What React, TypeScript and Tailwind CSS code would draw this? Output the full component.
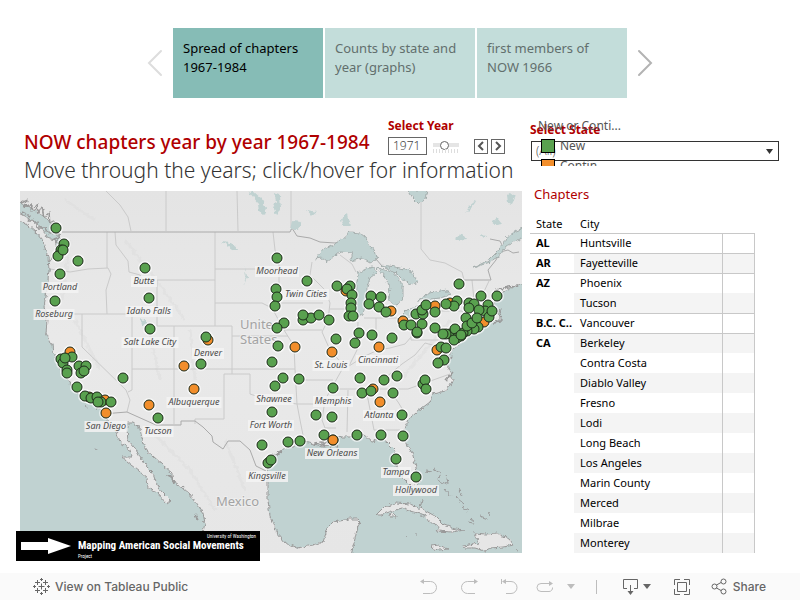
import { useState } from 'react'

type Dot = [number, number]

interface MapLabel {
  text: string
  x: number
  y: number
  w: number
}

interface ChapterRow {
  state?: string
  city: string
}

const TABS = [
  'Spread of chapters 1967-1984',
  'Counts by state and year (graphs)',
  'first members of NOW 1966'
]

const ROWS: ChapterRow[] = [
  { state: 'AL', city: 'Huntsville' },
  { state: 'AR', city: 'Fayetteville' },
  { state: 'AZ', city: 'Phoenix' },
  { city: 'Tucson' },
  { state: 'B.C. C..', city: 'Vancouver' },
  { state: 'CA', city: 'Berkeley' },
  { city: 'Contra Costa' },
  { city: 'Diablo Valley' },
  { city: 'Fresno' },
  { city: 'Lodi' },
  { city: 'Long Beach' },
  { city: 'Los Angeles' },
  { city: 'Marin County' },
  { city: 'Merced' },
  { city: 'Milbrae' },
  { city: 'Monterey' }
]

const LABELS: MapLabel[] = [
  { text: 'Portland', x: 60, y: 287, w: 37 },
  { text: 'Roseburg', x: 54, y: 314, w: 41 },
  { text: 'Butte', x: 144, y: 281, w: 26 },
  { text: 'Idaho Falls', x: 149, y: 311, w: 47 },
  { text: 'Salt Lake City', x: 150, y: 342, w: 57 },
  { text: 'Denver', x: 208, y: 353, w: 32 },
  { text: 'Albuquerque', x: 194, y: 402, w: 55 },
  { text: 'San Diego', x: 106, y: 426, w: 43 },
  { text: 'Tucson', x: 158, y: 431, w: 31 },
  { text: 'Moorhead', x: 277, y: 271, w: 44 },
  { text: 'Twin Cities', x: 306, y: 294, w: 46 },
  { text: 'St. Louis', x: 331, y: 365, w: 37 },
  { text: 'Cincinnati', x: 378, y: 360, w: 44 },
  { text: 'Shawnee', x: 274, y: 399, w: 39 },
  { text: 'Memphis', x: 333, y: 401, w: 40 },
  { text: 'Fort Worth', x: 271, y: 425, w: 46 },
  { text: 'Atlanta', x: 379, y: 415, w: 32 },
  { text: 'New Orleans', x: 332, y: 453, w: 54 },
  { text: 'Kingsville', x: 267, y: 476, w: 42 },
  { text: 'Tampa', x: 396, y: 472, w: 30 },
  { text: 'Hollywood', x: 416, y: 490, w: 46 }
]

// Continued chapters sit under the new ones
const CONTINUED: Dot[] = [
  [70, 352], [89, 397], [105, 400], [106, 413], [149, 405], [184, 366], [194, 389], [208, 340],
  [295, 347], [332, 352], [346, 291], [391, 311], [379, 347], [403, 321], [435, 306], [450, 303],
  [484, 322], [437, 350], [333, 440], [373, 389], [380, 402]
]

const NEW_CHAPTERS: Dot[] = [
  [56, 228], [64, 244], [61, 250], [58, 256], [63, 250], [78, 261], [60, 274], [55, 301],
  [145, 268], [149, 298], [150, 329], [72, 357], [61, 359], [63, 363], [65, 358], [79, 366],
  [86, 366], [67, 370], [67, 373], [81, 373], [84, 371], [77, 387], [85, 396], [91, 398],
  [97, 397], [101, 402], [98, 402], [111, 402], [123, 378], [158, 418], [206, 337], [201, 364],
  [277, 258], [307, 281], [276, 289], [277, 297], [275, 306], [284, 323], [277, 328], [278, 346],
  [272, 362], [336, 339], [329, 320], [303, 320], [311, 318], [319, 315], [303, 315], [337, 286],
  [350, 286], [347, 289], [352, 295], [351, 303], [351, 308], [349, 316], [353, 316], [359, 333],
  [355, 343], [371, 296], [369, 304], [381, 297], [379, 307], [386, 312], [372, 335], [392, 338],
  [404, 325], [411, 325], [422, 324], [417, 333], [417, 332], [416, 314], [423, 314], [422, 310],
  [426, 305], [435, 312], [457, 301], [454, 306], [446, 304], [459, 284], [481, 296], [497, 296],
  [469, 303], [474, 304], [469, 308], [488, 305], [485, 311], [489, 317], [479, 310], [492, 311],
  [466, 318], [478, 327], [474, 329], [467, 331], [463, 333], [450, 334], [446, 334],
  [435, 328], [455, 329], [467, 326], [461, 336], [472, 323], [477, 318], [443, 334], [457, 338],
  [454, 340], [461, 335], [441, 347], [446, 348], [444, 360], [438, 363], [283, 378], [299, 379],
  [275, 386], [272, 412], [333, 388], [316, 415], [332, 417], [262, 445], [288, 442], [300, 441],
  [324, 435], [357, 435], [268, 463], [271, 460], [360, 378], [384, 380], [397, 376], [362, 393],
  [371, 391], [393, 393], [402, 415], [381, 435], [403, 436], [396, 459], [416, 477], [423, 384],
  [425, 380], [426, 389]
]

const OCEANS = [
  // Pacific and the Gulf of California
  'M15 218 L28 225 L36 232 L43 240 L44 245 L48 257 L49 270 L47 290 L44 307 L47 320 L46 333 L52 345 L53 353 L57 358 L59 367 L62 373 L70 383 L77 393 L83 398 L95 404 L102 412 L106 418 L112 425 L117 433 L120 442 L128 448 L132 457 L123 457 L127 462 L135 468 L140 472 L147 478 L148 488 L157 493 L167 504 L171 501 L163 493 L158 487 L153 473 L147 467 L140 457 L135 448 L128 440 L127 430 L127 423 L133 423 L140 428 L142 438 L146 450 L153 456 L163 465 L172 473 L172 480 L182 487 L190 494 L198 505 L203 513 L205 523 L203 532 L210 560 L15 560 Z',
  // Gulf of Mexico and Atlantic
  'M268 483 L267 470 L270 462 L277 453 L290 447 L302 442 L310 443 L318 445 L323 447 L333 446 L327 440 L337 437 L350 437 L363 434 L372 442 L378 438 L387 442 L395 450 L393 460 L398 470 L405 480 L412 487 L418 485 L419 477 L416 468 L412 453 L407 445 L403 435 L405 427 L410 418 L422 408 L430 402 L433 394 L445 391 L450 385 L453 380 L450 372 L448 368 L447 358 L452 350 L457 347 L465 337 L477 330 L485 325 L492 320 L500 321 L500 316 L495 310 L494 302 L503 292 L513 287 L530 283 L530 560 L350 560 L354 543 L357 530 L360 522 L357 519 L350 519 L333 522 L328 527 L323 542 L313 545 L297 548 L285 543 L277 533 L270 517 L268 500 Z',
  // Straits round Vancouver Island
  'M15 201 L27 206 L38 212 L48 220 L53 231 L60 235 L61 245 L57 248 L55 240 L47 238 L43 229 L33 221 L15 211 Z'
]

const LAKES = [
  'M315 259 L322 251 L333 245 L342 239 L350 232 L360 233 L365 237 L370 245 L378 258 L370 262 L363 258 L350 261 L353 253 L340 252 L327 262 L322 258 Z',
  'M357 282 L358 273 L366 269 L373 267 L377 272 L370 278 L367 287 L366 300 L363 315 L358 317 L356 307 Z',
  'M377 268 L393 272 L398 278 L403 287 L403 298 L397 305 L392 303 L388 298 L390 287 L385 277 Z',
  'M381 265 L395 267 L410 270 L414 276 L418 282 L412 285 L403 280 L395 272 Z',
  'M397 320 L407 310 L422 305 L417 312 L411 316 L401 322 Z',
  'M418 300 L430 293 L447 290 L450 295 L440 298 L430 299 Z',
  'M524 228 L516 231 L507 237 L503 244 L497 252 L490 259 L483 263 L473 268 L490 262 L501 254 L506 246 L514 242 L524 237 Z',
  'M408 190 L427 190 L425 200 L418 203 L413 198 Z'
]

const SMALL_LAKES = [
  'M249 192 L253 191 L262 199 L266 208 L264 215 L259 211 L258 203 Z',
  'M274 193 L280 195 L281 209 L276 214 L273 208 L276 201 Z',
  'M341 219 L347 214 L350 226 L343 226 Z',
  'M307 210 L317 212 L312 216 Z',
  'M292 221 L301 222 L298 230 L290 230 Z',
  'M466 213 L469 206 L477 200 L472 207 Z',
  'M454 238 L462 234 L466 240 L457 241 Z',
  'M507 195 L511 192 L516 196 L512 204 L508 203 Z',
  'M492 222 L497 218 L502 224 L496 225 Z',
  'M480 235 L486 236 L484 239 Z',
  'M140 318 L146 321 L148 326 L142 325 Z',
  'M222 242 L231 243 L239 250 L232 249 Z',
  'M244 265 L247 276 L244 286 L246 275 Z'
]

const ISLANDS = [
  'M376 515 L384 507 L396 503 L410 504 L424 510 L435 516 L444 525 L455 529 L465 530 L452 532 L436 531 L440 526 L429 522 L424 515 L410 511 L402 508 L392 511 L381 515 Z',
  'M463 546 L474 544 L479 543 L474 533 L486 534 L498 533 L509 539 L514 545 L503 547 L490 548 L485 551 L475 548 L464 548 Z',
  'M431 546 L439 545 L448 549 L439 550 L432 549 Z',
  'M390 514 L395 513 L396 517 L391 517 Z'
]

const KEYS =
  'M425 471 L432 472 M434 469 L441 473 L439 478 M438 480 L446 484 M444 488 L451 496 M456 497 L464 504 M462 507 L468 511 M470 518 L475 522 M480 516 L488 519 M473 523 L468 522 M97 409 L102 411 M86 406 L87 408 M96 448 L97 450 M405 537 L407 538 M416 534 L418 534 M422 500 L420 507 M446 474 L448 484 M458 489 L462 496 M490 516 L488 512 M516 549 L518 550'

const NATIONAL =
  'M62 232 L290 232 L292 228 L297 236 L310 238 L320 242 L335 243 L345 241 L351 238 M351 242 L376 259 L382 266 M102 414 L127 412 L156 425 L181 425 L181 421 L195 421 L203 427 L212 436 L213 442 L223 449 L228 441 L240 441 L250 450 L256 466 L266 471 M464 280 L491 280 L488 270 L496 260 L500 252 L508 250 L513 253 L519 252 M490 239 L500 241 L503 247'

const STATES =
  'M107 232 V268 M50 269 L70 272 L88 269 L108 268 L111 274 L106 290 L107 314 M115 232 L116 245 L128 261 L129 272 L140 275 L143 280 M157 280 H215 M157 280 V326 H174 V369 M48 314 H132 V369 M82 314 V347 L126 390 L130 400 L127 412 M132 369 V390 L128 392 M215 232 V326 M174 326 H232 V374 M132 369 H295 M174 369 V424 M224 374 V419 H195 V424 M224 374 H250 V394 L265 399 L297 404 M215 269 H279 M215 303 H262 L272 308 L284 330 L294 346 L295 369 L297 404 L300 420 L304 440 M273 232 L275 250 L279 265 L279 303 H323 M284 330 L322 330 M232 336 H288 M312 262 L310 275 L325 290 L330 303 L328 320 L322 332 L330 350 L344 366 L335 382 L325 400 L322 420 L325 428 H336 M296 380 H333 M330 389 H408 L450 374 M348 390 L347 432 M366 389 L374 430 H400 M388 389 L398 402 L406 415 M330 309 H350 M358 322 L357 350 L349 366 L365 356 L378 350 L390 348 L405 344 L412 336 M376 318 V348 M364 318 H397 M411 322 V340 H455 M430 311 H462 L468 320 L463 332 M421 195 V249 L430 260 L445 263 L462 272 L464 280 M472 280 L474 300 M481 298 L489 281 M466 307 H490 M385 378 L402 364 L415 355 L425 343 L436 346 M166 191 V231 M106 191 L120 205 L128 217 L131 231 M237 191 L238 231 M291 191 V228 M297 404 H321 M340 255 L352 264 L356 272'

const FJORDS =
  'M20 203 L27 200 L24 207 L32 204 L31 211 L37 204 L38 213 L42 207 L44 217 L49 213 L50 224 L54 222 M22 212 L30 216 L28 221 L37 221 L37 228 L46 228 L49 234 L56 233 L60 237 L54 239 L60 244 L57 249 L62 253 M49 262 L52 258 M166 476 L172 477 L174 483 M195 515 L198 520 M272 456 L282 451 M314 443 L325 446 L321 441 L337 446 M331 438 L341 437 M446 380 L453 372 M493 291 L508 287 L517 286 M496 314 L500 310 L501 322 L493 323 M445 351 L449 360 L452 356'

function ChapterMap() {
  return (
    <svg viewBox="20 191 502 362" className="block w-full" role="img" aria-label="Map of NOW chapters">
      <defs>
        <filter id="coast" x="-5%" y="-5%" width="110%" height="110%">
          <feTurbulence type="fractalNoise" baseFrequency="0.25" numOctaves="2" seed="4" />
          <feDisplacementMap in="SourceGraphic" scale="5" xChannelSelector="R" yChannelSelector="G" />
        </filter>
        <linearGradient id="land" x1="0" y1="0" x2="0" y2="1">
          <stop offset="0" stopColor="#e4e4e4" />
          <stop offset="0.4" stopColor="#e9e9e9" />
          <stop offset="1" stopColor="#e6e6e6" />
        </linearGradient>
      </defs>
      <rect x="20" y="191" width="502" height="362" fill="url(#land)" />

      {/* Mountain shading */}
      <g stroke="#dedede" strokeWidth="3" fill="none" opacity="0.5" filter="url(#coast)">
        <path d="M65 200 L95 220 M70 240 L62 300 M125 240 L160 285 L185 320 M150 335 L160 380 M190 330 L195 380 M75 320 L100 370 M150 430 L190 470 L215 510 M225 440 L245 490 M400 380 L430 345 L450 320" />
      </g>

      <g fill="none" stroke="#cacaca" strokeWidth="1">
        <path d={STATES} />
        <path d={NATIONAL} stroke="#aaaaaa" />
      </g>

      <g filter="url(#coast)" stroke="#999999" strokeWidth="1" fill="#c0d2d1" strokeLinejoin="round">
        {OCEANS.map((d) => <path key={d} d={d} />)}
        {LAKES.map((d) => <path key={d} d={d} stroke="#a5aead" />)}
        {SMALL_LAKES.map((d) => <path key={d} d={d} stroke="none" />)}
        {ISLANDS.map((d) => <path key={d} d={d} fill="#e6e6e6" />)}
        <path d={KEYS} fill="none" />
        <path d={FJORDS} fill="none" strokeWidth="1.5" />
      </g>

      <g fill="#a3a3a3" stroke="#eeeeee" strokeWidth="2" paintOrder="stroke" className="font-['Noto_Sans',sans-serif] text-[13px]">
        <text x="240" y="329">United</text>
        <text x="240" y="344">States</text>
        <text x="216" y="506">Mexico</text>
      </g>

      <g className="font-['Noto_Sans',sans-serif] text-[9px] italic" textAnchor="middle">
        {LABELS.map((label) => (
          <g key={label.text}>
            <rect x={label.x - label.w / 2} y={label.y - 5} width={label.w} height="11" fill="#f3f3f3" fillOpacity="0.85" />
            <text x={label.x} y={label.y + 3} fill="#4a4a4a">{label.text}</text>
          </g>
        ))}
      </g>

      <g fill="none" stroke="#ffffff" strokeOpacity="0.6" strokeWidth="2">
        {[...CONTINUED, ...NEW_CHAPTERS].map(([x, y], i) => <circle key={i} cx={x} cy={y} r="6" />)}
      </g>
      <g stroke="#1d2b1a" strokeWidth="1">
        {CONTINUED.map(([x, y], i) => <circle key={i} cx={x} cy={y} r="5" fill="#f28e2b" />)}
        {NEW_CHAPTERS.map(([x, y], i) => <circle key={i} cx={x} cy={y} r="5" fill="#59a14f" />)}
        {/* New Orleans lies over its neighbour */}
        <circle cx="333" cy="440" r="5" fill="#f28e2b" />
      </g>
    </svg>
  )
}

function TableauMark() {
  return (
    <svg width="17" height="17" viewBox="0 0 17 17" fill="none" stroke="#666666" aria-hidden="true">
      <path d="M8.5 5.5v6M5.5 8.5h6M8.5 0v3M7 1.5h3M8.5 14v3M7 15.5h3M1.5 7v3M0 8.5h3M15.5 7v3M14 8.5h3M4.5 2v5M2 4.5h5M12.5 2v5M10 4.5h5M4.5 10v5M2 12.5h5M12.5 10v5M10 12.5h5" />
    </svg>
  )
}

function ToolbarIcon({ d, fill, width = 18 }: { d: string; fill?: string; width?: number }) {
  return (
    <svg width={width} height="18" viewBox={`0 0 ${width} 18`} fill="none" stroke="currentColor" aria-hidden="true">
      <path d={d} />
      {fill && <path d={fill} fill="currentColor" stroke="none" />}
    </svg>
  )
}

export default function App() {
  const [activeTab, setActiveTab] = useState(0)
  const [year, setYear] = useState(1971)

  return (
    <div className="flex min-h-screen flex-col bg-white font-['Noto_Sans',sans-serif] text-black">
      {/* Story points */}
      <nav className="flex items-center justify-center gap-2.5 pt-7">
        <button className="text-[#dddddd]" aria-label="Previous" disabled>
          <svg width="16" height="28" viewBox="0 0 16 28" fill="none" stroke="currentColor" strokeWidth="2" strokeLinecap="round">
            <path d="M14 2L2 14l12 12" />
          </svg>
        </button>
        <div className="flex gap-0.5">
          {TABS.map((tab, i) => (
            <button
              key={tab}
              onClick={() => setActiveTab(i)}
              className={`flex h-[70px] w-[150px] items-start px-2.5 pt-[11px] text-left text-[13px] leading-[19px] ${
                i === activeTab ? 'bg-[#86bcb6] text-black' : 'bg-[#c3ddda] text-[#626f6d]'
              }`}
            >
              {tab}
            </button>
          ))}
        </div>
        <button className="text-[#b3b3b3]" aria-label="Next">
          <svg width="16" height="28" viewBox="0 0 16 28" fill="none" stroke="currentColor" strokeWidth="2" strokeLinecap="round">
            <path d="M2 2l12 12L2 26" />
          </svg>
        </button>
      </nav>

      <main className="flex flex-1 gap-2 pl-5 pr-[21px] pt-[18px]">
        <section className="min-w-0 flex-1">
          <header className="pl-1">
            <div className="flex items-end justify-between pr-4">
              <h1 className="whitespace-nowrap text-[19px] font-medium leading-7 text-[#b00000]">NOW chapters year by year 1967-1984</h1>
              <div className="w-[118px] pb-px">
                <label htmlFor="year" className="mb-px block text-[12px] font-bold leading-5 text-[#b00000]">Select Year</label>
                <div className="flex items-center">
                  <input
                    id="year"
                    value={year}
                    onChange={(e) => setYear(Number(e.target.value) || 1967)}
                    className="h-[18px] w-[39px] border border-[#666666] pl-1 text-[12px] font-light text-[#444444]"
                  />
                  <div className="ml-1.5 flex w-[26px] flex-col gap-0.5 pt-1">
                    <input
                      type="range"
                      aria-label="Year"
                      min="1967"
                      max="1977"
                      value={year}
                      onChange={(e) => setYear(Number(e.target.value))}
                      className="h-1 w-full appearance-none bg-[#e5e5e5] [&::-webkit-slider-thumb]:h-[9px] [&::-webkit-slider-thumb]:w-[9px] [&::-webkit-slider-thumb]:appearance-none [&::-webkit-slider-thumb]:rounded-full [&::-webkit-slider-thumb]:border [&::-webkit-slider-thumb]:border-[#666666] [&::-webkit-slider-thumb]:bg-white"
                    />
                    <div className="h-1 bg-[repeating-linear-gradient(90deg,#dddddd_0_1px,transparent_1px_3px)]" />
                  </div>
                  <div className="ml-auto flex gap-[3px] pr-px text-[#555555]">
                    <button aria-label="Previous year" onClick={() => setYear(year - 1)} className="flex h-[15px] w-3.5 items-center justify-center border border-[#666666]">
                      <svg width="8" height="10" viewBox="0 0 8 10" fill="none" stroke="currentColor" strokeWidth="2"><path d="M6 1L2 5l4 4" /></svg>
                    </button>
                    <button aria-label="Next year" onClick={() => setYear(year + 1)} className="flex h-[15px] w-3.5 items-center justify-center border border-[#666666]">
                      <svg width="8" height="10" viewBox="0 0 8 10" fill="none" stroke="currentColor" strokeWidth="2"><path d="M2 1l4 4-4 4" /></svg>
                    </button>
                  </div>
                </div>
              </div>
            </div>
            <h2 className="whitespace-nowrap text-[21px] font-light leading-7 text-[#333333]">Move through the years; click/hover for information</h2>
          </header>

          <div className="relative mt-[7px]">
            <ChapterMap />
            <div className="absolute -bottom-2 -left-1 flex h-[30px] w-[244px] items-center bg-black pl-1 text-white">
              <svg width="52" height="16" viewBox="0 0 52 16" fill="#ffffff" className="shrink-0" aria-hidden="true">
                <path d="M1 4h27V0l23 8-23 8v-4H1z" />
              </svg>
              <div className="relative flex-1 pl-1.5 font-['Roboto_Condensed','Liberation_Sans_Narrow','Liberation_Sans',sans-serif]">
                <div className="whitespace-nowrap text-[11px] font-bold leading-4">Mapping American Social Movements</div>
                <div className="absolute -top-1.5 right-1 text-[5px] leading-2">University of Washington</div>
                <div className="absolute top-3.5 left-1.5 text-[5px] leading-2">Project</div>
              </div>
            </div>
          </div>
        </section>

        <aside className="w-[249px] shrink-0 pt-1.5">
          <div className="relative">
            <label htmlFor="state" className="block text-[12px] font-bold leading-4 text-[#b00000]">Select State</label>
            <div className="relative ml-px mt-[3px]">
              <select id="state" className="block h-5 w-full appearance-none border border-[#333333] bg-white pl-1 text-[12px] font-light text-[#555555]">
                <option>(All)</option>
              </select>
              <svg width="7" height="5" viewBox="0 0 7 5" className="pointer-events-none absolute right-1.5 top-2" aria-hidden="true">
                <path d="M0 0h7L3.5 5z" fill="#333333" />
              </svg>
            </div>
            {/* Colour legend floats over the state filter */}
            <div className="pointer-events-none absolute -top-1 left-2 h-12 w-24 overflow-hidden text-[12px] text-[#555555]">
              <div className="mb-0.5 leading-4">New or Conti...</div>
              <div className="flex h-5 items-center gap-[5px] pl-[3px]">
                <span className="h-3.5 w-3.5 border border-black bg-[#59a14f]" />
                <span>New</span>
              </div>
              <div className="flex h-5 items-center gap-[5px] pl-[3px]">
                <span className="h-3.5 w-3.5 border border-black bg-[#f28e2b]" />
                <span>Contin..</span>
              </div>
            </div>
          </div>

          <h3 className="mt-[23px] pl-1 text-[13px] leading-5 text-[#b00000]">Chapters</h3>

          <table className="mt-3 w-[225px] table-fixed border-collapse text-[11px]">
            <thead>
              <tr className="h-[17px] text-left leading-4">
                <th className="w-11 p-0 pl-1.5 font-normal">State</th>
                <th className="w-[148px] p-0 pl-1.5 font-normal">City</th>
                <th className="w-8" aria-label="Mark" />
              </tr>
            </thead>
            <tbody>
              {ROWS.map((row, i) => (
                <tr key={row.city} className={`h-5 ${row.state ? 'border-t border-[#c8c8c8]' : ''}`}>
                  <th scope="row" className="whitespace-nowrap p-0 pl-1.5 text-left leading-4">{row.state}</th>
                  <td className={`p-0 pl-1.5 leading-4 ${i % 2 ? 'bg-[#f4f4f4]' : ''}`}>{row.city}</td>
                  <td className={`border-x border-[#c8c8c8] p-0 ${i % 2 ? 'bg-[#f4f4f4]' : ''}`} />
                </tr>
              ))}
            </tbody>
          </table>
        </aside>
      </main>

      {/* Toolbar */}
      <footer className="mt-5 flex h-[27px] items-center bg-[#fafafa] px-[33px] font-['Inter',sans-serif] text-[12px] font-medium text-[#666666]">
        <a href="#" className="flex items-center gap-[5px]">
          <TableauMark />
          View on Tableau Public
        </a>
        <div className="ml-auto flex items-center">
          <div className="flex items-center gap-[22px] text-[#bdbdbd]">
            <button aria-label="Undo"><ToolbarIcon d="M2 3.5h8.5a6 6 0 010 12H3" fill="M0 3.5L4 1v5z" /></button>
            <button aria-label="Redo"><ToolbarIcon d="M16 3.5H7.5a6 6 0 000 12H15" fill="M18 3.5L14 1v5z" /></button>
            <button aria-label="Revert"><ToolbarIcon d="M1.5 1v5M4 3.5h7a6 6 0 010 12H6" fill="M2 3.5L6 1v5z" /></button>
          </div>
          <button aria-label="Refresh" className="ml-[18px] text-[#bdbdbd]">
            <ToolbarIcon d="M14 5.5H5a4 4 0 000 8h8a3.5 3.5 0 003.5-4" fill="M17 5.5L13 3v5z" />
          </button>
          <button aria-label="Refresh options" className="ml-[13px] text-[#bdbdbd]">
            <svg width="8" height="5" viewBox="0 0 8 5" fill="currentColor"><path d="M0 0h8L4 5z" /></svg>
          </button>
          <span className="ml-[21px] h-3.5 w-px bg-[#bdbdbd]" />
          <button aria-label="Download" className="ml-[25px] flex items-center gap-1">
            <ToolbarIcon d="M5 10.5H1.5v-9h14v9H12M8.5 7v9" fill="M5.5 13h6l-3 4z" width={17} />
            <svg width="8" height="5" viewBox="0 0 8 5" fill="currentColor"><path d="M0 0h8L4 5z" /></svg>
          </button>
          <button aria-label="Full screen" className="ml-[22px]">
            <ToolbarIcon d="M4.5 4.5h9v9h-9zM1.5 7V1.5H7M11 1.5h5.500V7M16.5 11v5.5H11M7 16.5H1.5V11" />
          </button>
          <button className="ml-5 flex items-center gap-[5px] pr-px">
            <svg width="17" height="17" viewBox="0 0 17 17" fill="none" stroke="currentColor" aria-hidden="true">
              <circle cx="3.5" cy="8.5" r="2.5" />
              <circle cx="12.5" cy="3.5" r="2.5" />
              <circle cx="12.5" cy="13.5" r="2.5" />
              <path d="M5.5 7l4.5-2.5M5.5 10l4.5 2.5" />
            </svg>
            Share
          </button>
        </div>
      </footer>
    </div>
  )
}
